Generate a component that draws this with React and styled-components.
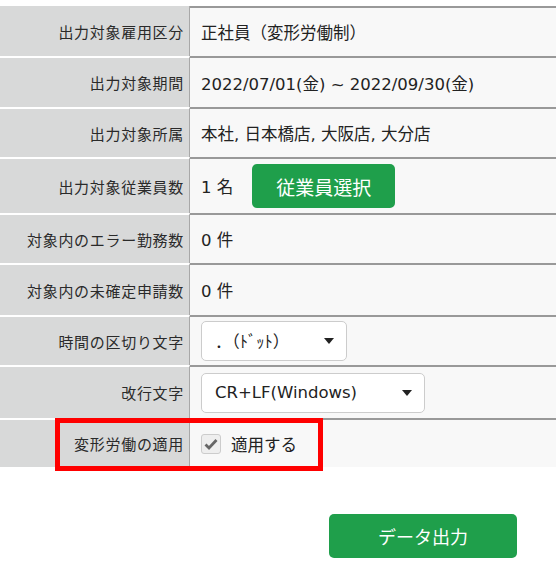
import React from 'react';
import styled, { createGlobalStyle } from 'styled-components';

const Global = createGlobalStyle`
  body {
    margin: 0;
    background: #fff;
    font-family: "Noto Sans CJK JP", "Noto Sans", sans-serif;
    color: #222;
  }
`;

const latin = `"DejaVu Sans", "Noto Sans CJK JP", sans-serif`;

const Page = styled.div`
  width: 556px;
  padding-top: 6px;
`;

const Table = styled.div`
  display: flex;
  flex-direction: column;
`;

const Row = styled.div`
  position: relative;
  display: grid;
  grid-template-columns: 190px 1fr;
  height: ${(p) => p.h}px;
`;

const Label = styled.div`
  display: flex;
  align-items: center;
  justify-content: flex-end;
  padding-right: 5px;
  background: #d8d9d9;
  border-top: ${(p) => (p.first ? 'none' : '2px solid #fff')};
  border-right: 1px solid #a8a8a8;
  font-size: 15px;
  letter-spacing: 0.7px;
  color: #2a2a2a;
  white-space: nowrap;
`;

const Value = styled.div`
  display: flex;
  align-items: center;
  gap: 19px;
  padding-left: 11px;
  background: #f8f8f8;
  border-top: 2px solid #999;
  font-family: ${latin};
  font-size: 16.5px;
  color: #222;
  white-space: nowrap;
`;

const GreenButton = styled.button`
  height: 44px;
  width: ${(p) => p.w}px;
  border: none;
  border-radius: 5px;
  background: #1f9f4b;
  color: #fff;
  font-family: "Noto Sans CJK JP", sans-serif;
  font-size: ${(p) => p.fs}px;
  cursor: pointer;
`;

const Select = styled.div`
  position: relative;
  display: flex;
  align-items: center;
  box-sizing: border-box;
  width: ${(p) => p.w}px;
  height: 40px;
  padding-left: 13px;
  background: #fff;
  border: 1px solid #ccc;
  border-radius: 5px;
  font-size: 16.5px;
`;

const Caret = styled.span`
  position: absolute;
  right: 12px;
  top: 16px;
  width: 0;
  height: 0;
  border-left: 5px solid transparent;
  border-right: 5px solid transparent;
  border-top: 6px solid #222;
`;

const Check = styled.span`
  display: inline-flex;
  align-items: center;
  justify-content: center;
  box-sizing: border-box;
  width: 20px;
  height: 20px;
  margin-right: -9px;
  background: #eee;
  border: 1px solid #ccc;
  border-radius: 3px;
`;

const Highlight = styled.div`
  position: absolute;
  left: 55px;
  top: 0;
  width: 268px;
  height: 53px;
  box-sizing: border-box;
  border: 5px solid #f00;
  pointer-events: none;
`;

const Footer = styled.div`
  display: flex;
  justify-content: flex-end;
  padding: 47px 39px 0 0;
`;

const CheckIcon = () => (
  <svg width="14" height="12" viewBox="0 0 14 12">
    <path d="M1.5 6.5 L5 10 L12.5 2" fill="none" stroke="#666" strokeWidth="2.8" />
  </svg>
);

export default function App() {
  return (
    <Page>
      <Global />
      <Table>
        <Row h={50}>
          <Label first>出力対象雇用区分</Label>
          <Value>正社員（変形労働制）</Value>
        </Row>
        <Row h={51}>
          <Label>出力対象期間</Label>
          <Value>2022/07/01(金) ~ 2022/09/30(金)</Value>
        </Row>
        <Row h={50}>
          <Label>出力対象所属</Label>
          <Value>本社, 日本橋店, 大阪店, 大分店</Value>
        </Row>
        <Row h={56}>
          <Label>出力対象従業員数</Label>
          <Value>
            <span>1 名</span>
            <GreenButton w={143} fs={19}>従業員選択</GreenButton>
          </Value>
        </Row>
        <Row h={50}>
          <Label>対象内のエラー勤務数</Label>
          <Value>0 件</Value>
        </Row>
        <Row h={52}>
          <Label>対象内の未確定申請数</Label>
          <Value>0 件</Value>
        </Row>
        <Row h={50}>
          <Label>時間の区切り文字</Label>
          <Value>
            <Select w={146}>
              ．（ﾄﾞｯﾄ）
              <Caret />
            </Select>
          </Value>
        </Row>
        <Row h={53}>
          <Label>改行文字</Label>
          <Value>
            <Select w={224}>
              CR+LF(Windows)
              <Caret />
            </Select>
          </Value>
        </Row>
        <Row h={49}>
          <Label>変形労働の適用</Label>
          <Value>
            <Check>
              <CheckIcon />
            </Check>
            <span>適用する</span>
          </Value>
          <Highlight />
        </Row>
      </Table>
      <Footer>
        <GreenButton w={188} fs={18}>データ出力</GreenButton>
      </Footer>
    </Page>
  );
}
